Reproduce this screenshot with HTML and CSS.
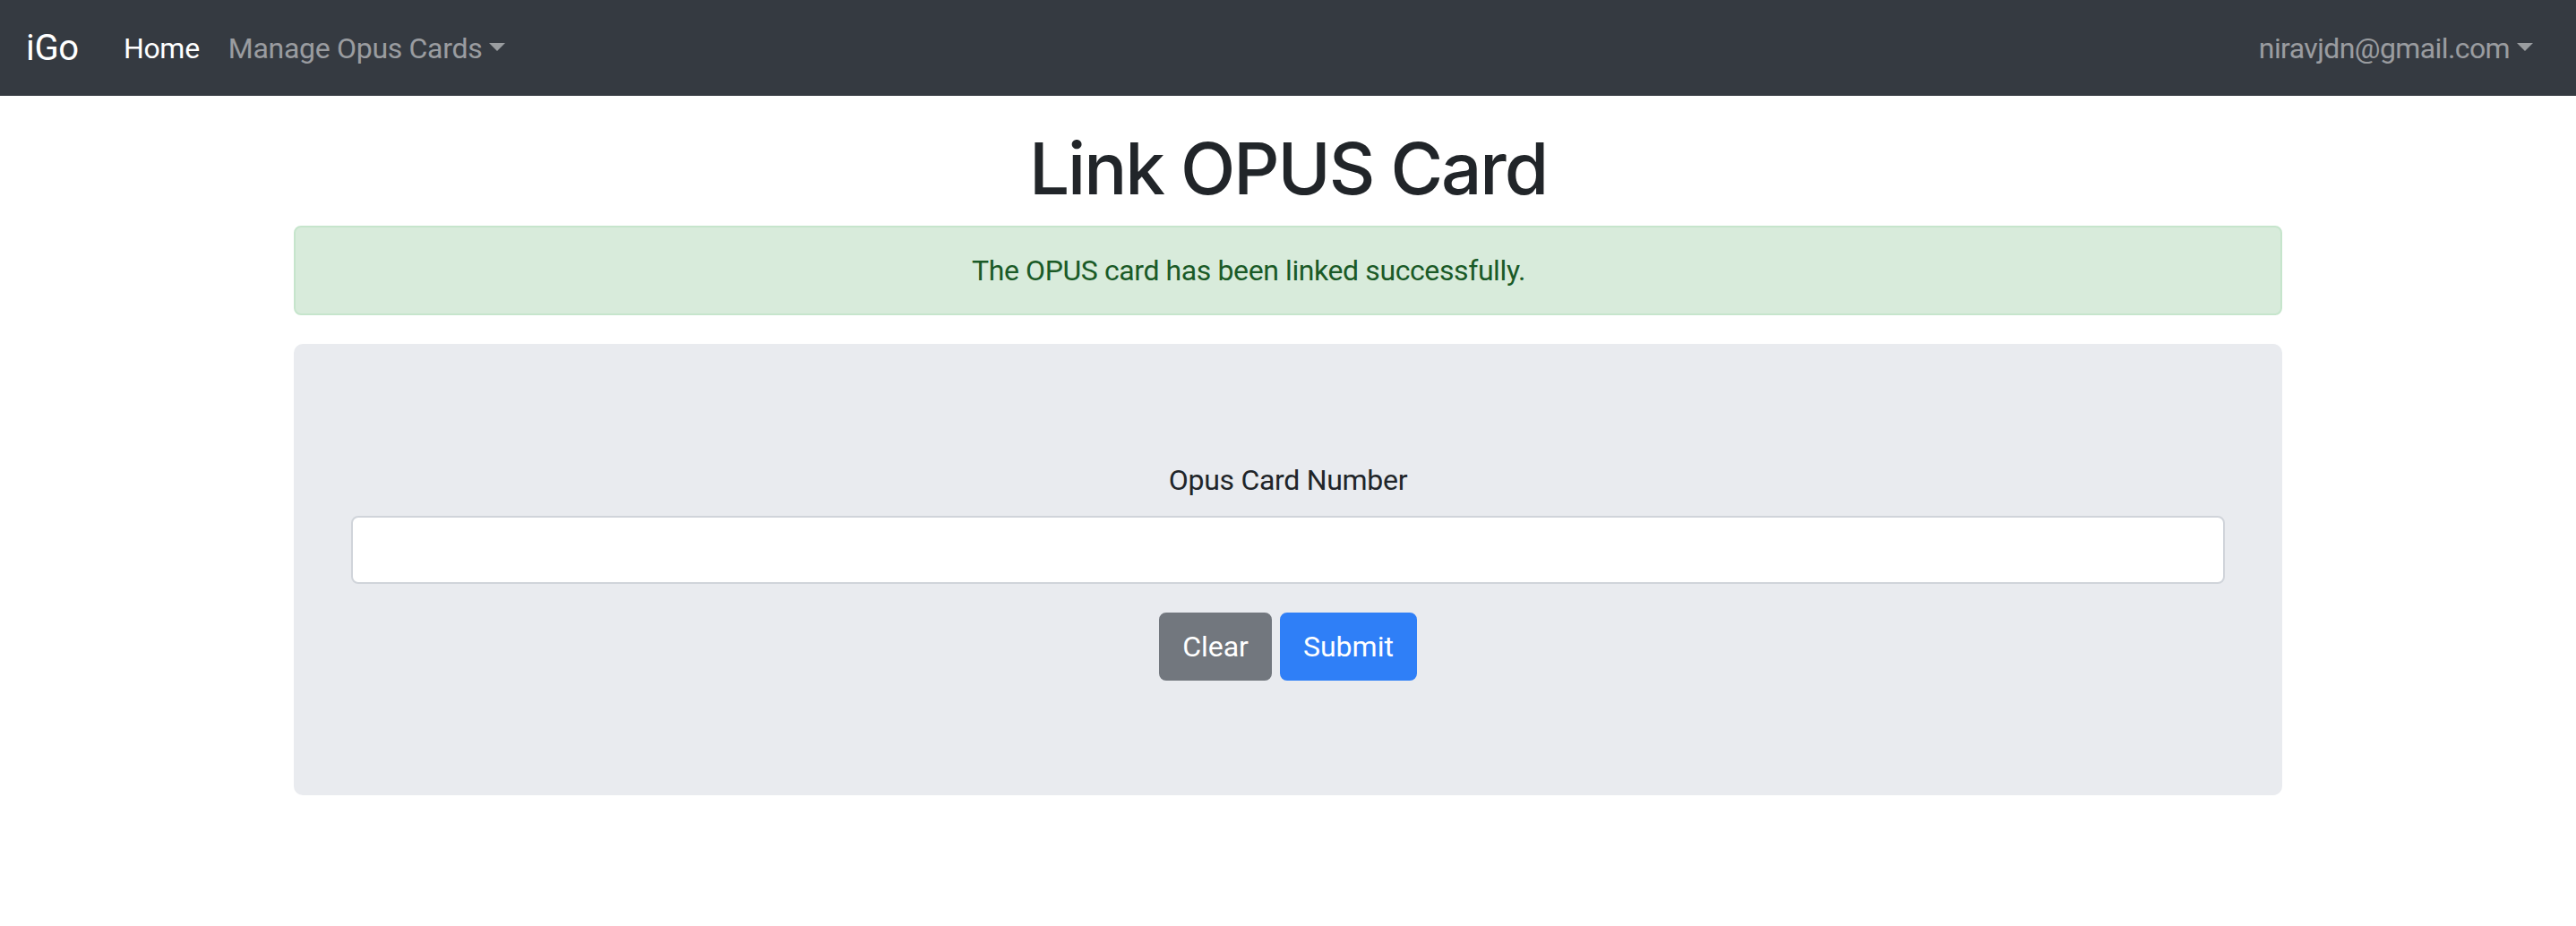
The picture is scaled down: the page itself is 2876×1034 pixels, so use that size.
FILE: index.html
```html
<!DOCTYPE html>
<html lang="en">
<head>
<meta charset="utf-8">
<title>Link OPUS Card</title>
<link rel="stylesheet" href="styles.css">
</head>
<body>
<nav class="navbar">
  <a class="brand" href="#">iGo</a>
  <ul class="nav">
    <li><a class="nav-link active" href="#">Home</a></li>
    <li><a class="nav-link dropdown" href="#">Manage Opus Cards</a></li>
  </ul>
  <ul class="nav nav-right">
    <li><a class="nav-link dropdown" href="#">niravjdn@gmail.com</a></li>
  </ul>
</nav>
<main class="container">
  <h1 class="title">Link OPUS Card</h1>
  <div class="alert">The OPUS card has been linked successfully.</div>
  <div class="jumbo">
    <form class="form">
      <div class="form-group">
        <label class="label" for="card">Opus Card Number</label>
        <input class="form-control" id="card" type="text">
      </div>
      <div class="actions">
        <button class="btn btn-secondary" type="reset">Clear</button>
        <button class="btn btn-primary" type="button">Submit</button>
      </div>
    </form>
  </div>
</main>
</body>
</html>
```
FILE: styles.css
```css
* { box-sizing: border-box; }
html, body { margin: 0; padding: 0; }
body {
  font-family: Roboto, "Noto Sans", "Liberation Sans", sans-serif;
  font-size: 32px;
  line-height: 1.5;
  letter-spacing: -0.3px;
  color: #212529;
  background: #fff;
}
a { text-decoration: none; }

.navbar {
  height: 107px;
  background: #353a41;
  display: flex;
  align-items: center;
  padding: 0 32px 0 29px;
}
.brand {
  color: #fff;
  font-size: 40px;
  line-height: 60px;
  margin-right: 34px;
}
.nav {
  list-style: none;
  margin: 0;
  padding: 0;
  display: flex;
}
.nav-right { margin-left: auto; }
.nav-link {
  display: block;
  padding: 16px;
  line-height: 48px;
  color: rgba(255, 255, 255, 0.5);
}
.nav-right .nav-link { letter-spacing: -0.6px; }
.nav-link.active { color: #fff; }
.dropdown::after {
  content: "";
  display: inline-block;
  margin-left: 8px;
  vertical-align: 8px;
  border-top: 9.6px solid currentColor;
  border-left: 9.6px solid transparent;
  border-right: 9.6px solid transparent;
}

.container {
  width: 2220px;
  margin: 0 auto;
  padding-top: 33px;
}
.title {
  margin: 0 0 16px;
  font-family: Inter, Roboto, sans-serif;
  font-size: 80px;
  font-weight: 500;
  letter-spacing: -2.1px;
  line-height: 1.2;
  text-align: center;
}
.alert {
  background: #d8ebdb;
  border: 2px solid #c6e5cc;
  color: #1a5a27;
  border-radius: 8px;
  padding: 24px 128px 24px 40px;
  text-align: center;
  margin-bottom: 32px;
  letter-spacing: -0.4px;
}
.jumbo {
  background: #e9ebef;
  border-radius: 10px;
  padding: 128px 64px;
}
.form-group {
  margin-bottom: 32px;
  text-align: center;
}
.label {
  display: block;
  margin-bottom: 16px;
}
.form-control {
  display: block;
  width: 100%;
  height: 76px;
  border: 2px solid #d0d4da;
  border-radius: 8px;
  background: #fff;
  font: inherit;
  padding: 12px 24px;
}
.actions {
  display: flex;
  justify-content: center;
  gap: 9px;
}
.btn {
  font: inherit;
  color: #fff;
  border: 2px solid transparent;
  border-radius: 8px;
  padding: 12px 24px;
  line-height: 48px;
  height: 76px;
  cursor: pointer;
}
.btn-secondary { background: #72777e; border-color: #72777e; }
.btn-primary { background: #2f7ff7; border-color: #2f7ff7; }
```
